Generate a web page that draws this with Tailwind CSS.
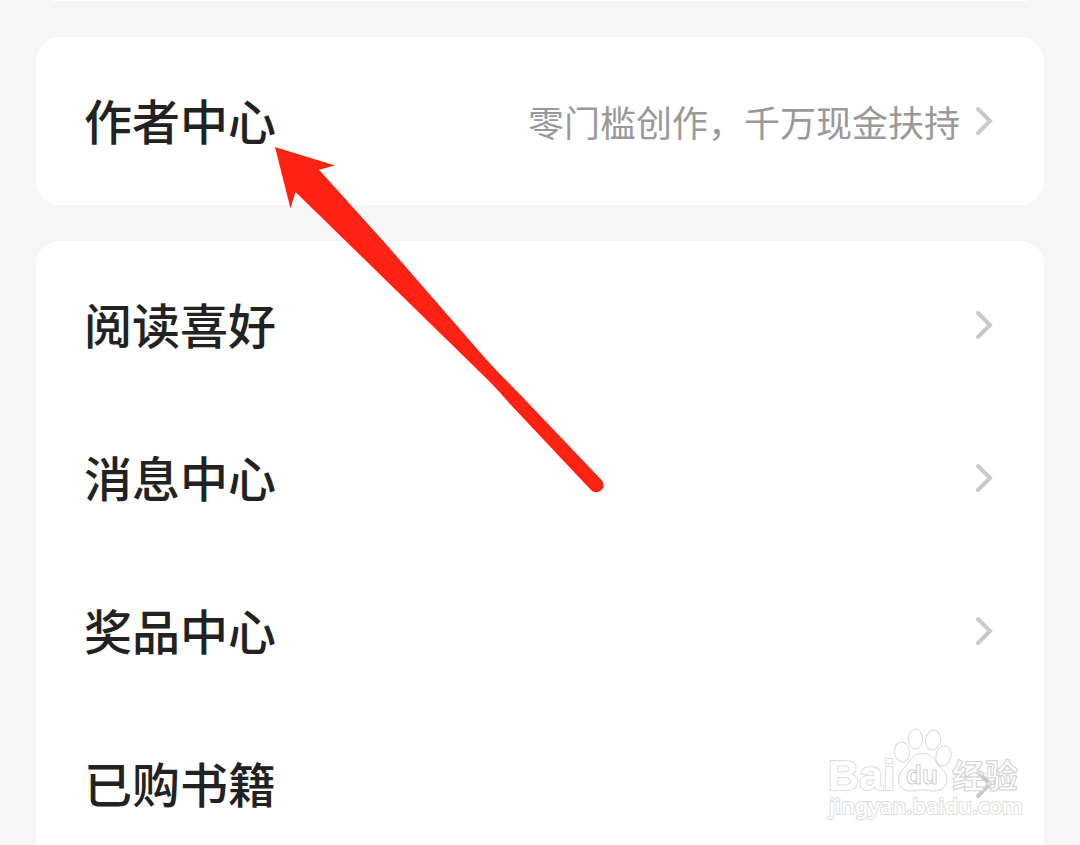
<!DOCTYPE html>
<html lang="zh-CN">

<head>
  <meta charset="UTF-8">
  <meta name="viewport" content="width=device-width, initial-scale=1.0">
  <title>作者中心</title>
  <script src="https://cdn.jsdelivr.net/npm/@tailwindcss/browser@4"></script>
</head>

<body class="relative h-screen overflow-hidden bg-[#f6f6f6] font-['Noto_Sans_CJK_SC',sans-serif] text-[#222222]">
  <svg class="hidden">
    <symbol id="chevron" viewBox="0 0 36 36">
      <path d="M18 6L30 18L18 30" fill="none" stroke="#c9c9c9" stroke-width="4" stroke-linecap="round" stroke-linejoin="miter" />
    </symbol>
  </svg>

  <main class="flex flex-col gap-9 px-9">
    <!-- end of the section above -->
    <div class="h-px mx-4 bg-white"></div>

    <nav class="rounded-3xl bg-white py-2">
      <a href="#author" class="flex h-38 items-center justify-between px-12">
        <span class="pb-1 text-5xl font-medium">作者中心</span>
        <span class="flex items-center">
          <span class="text-4xl text-[#999999]">零门槛创作，千万现金扶持</span>
          <svg class="size-9"><use href="#chevron" /></svg>
        </span>
      </a>
    </nav>

    <nav class="rounded-t-3xl bg-white pt-[7px]">
      <a href="#preference" class="flex h-[153px] items-center justify-between px-12">
        <span class="pb-1 text-5xl font-medium">阅读喜好</span>
        <svg class="size-9"><use href="#chevron" /></svg>
      </a>
      <a href="#messages" class="flex h-[153px] items-center justify-between px-12">
        <span class="pb-1 text-5xl font-medium">消息中心</span>
        <svg class="size-9"><use href="#chevron" /></svg>
      </a>
      <a href="#prizes" class="flex h-[153px] items-center justify-between px-12">
        <span class="pb-1 text-5xl font-medium">奖品中心</span>
        <svg class="size-9"><use href="#chevron" /></svg>
      </a>
      <a href="#books" class="flex h-[153px] items-center justify-between px-12">
        <span class="pb-1 text-5xl font-medium">已购书籍</span>
        <svg class="size-9"><use href="#chevron" /></svg>
      </a>
    </nav>
  </main>

  <!-- arrow pointing at the author entry -->
  <svg class="pointer-events-none absolute left-[270px] top-[140px] h-[360px] w-[340px]" viewBox="0 0 340 360">
    <path fill="#ff2113" d="M5 7L65 25.500L49 29.700L115 103L215 218C225 229.500 240 244 250 254.500L331.500 340A6.500 6.500 0 0 1 321 350L240 264C233 256 226 248 218 240L25.500 52L20.500 68.500Z" />
  </svg>

  <!-- watermark -->
  <svg class="pointer-events-none absolute bottom-4 right-12 h-[110px] w-[208px]" viewBox="0 0 208 110" fill="#ffffff" stroke="#dedede" stroke-width="1">
    <text x="4" y="71" stroke-width="2" paint-order="stroke" class="font-['Liberation_Sans'] text-[43px] font-bold">Bai</text>
    <g fill="none" stroke="#d8d8d8">
      <ellipse cx="78" cy="33" rx="7.500" ry="10" transform="rotate(-8 78 33)" />
      <ellipse cx="91.500" cy="20" rx="7" ry="10" />
      <ellipse cx="109" cy="21" rx="7.500" ry="10" transform="rotate(10 109 21)" />
      <ellipse cx="119.500" cy="37" rx="7.500" ry="10" transform="rotate(12 119.500 37)" />
      <path d="M98.500 34.500C105 34.500 109 38 112 43C115 49 123 52 123 60C123 68 117 72 110 72C106 72 103 71 98.500 71C94 71 91 72 86 72C79 72 74.500 67 74.500 60C74.500 52 82 49 85 43C88 38 92 34.500 98.500 34.500Z" />
    </g>
    <text x="82" y="65" stroke="#d0d0d0" class="font-['Liberation_Sans'] text-[26px] font-bold">du</text>
    <text x="128" y="69" fill-opacity="0.5" stroke="#d0d0d0" class="font-['Noto_Sans_CJK_SC',sans-serif] text-[33px] font-bold">经验</text>
    <text x="5" y="95" stroke-width="2" paint-order="stroke" class="font-['Noto_Sans'] text-[22px] font-medium">jingyan.baidu.com</text>
  </svg>
</body>

</html>
